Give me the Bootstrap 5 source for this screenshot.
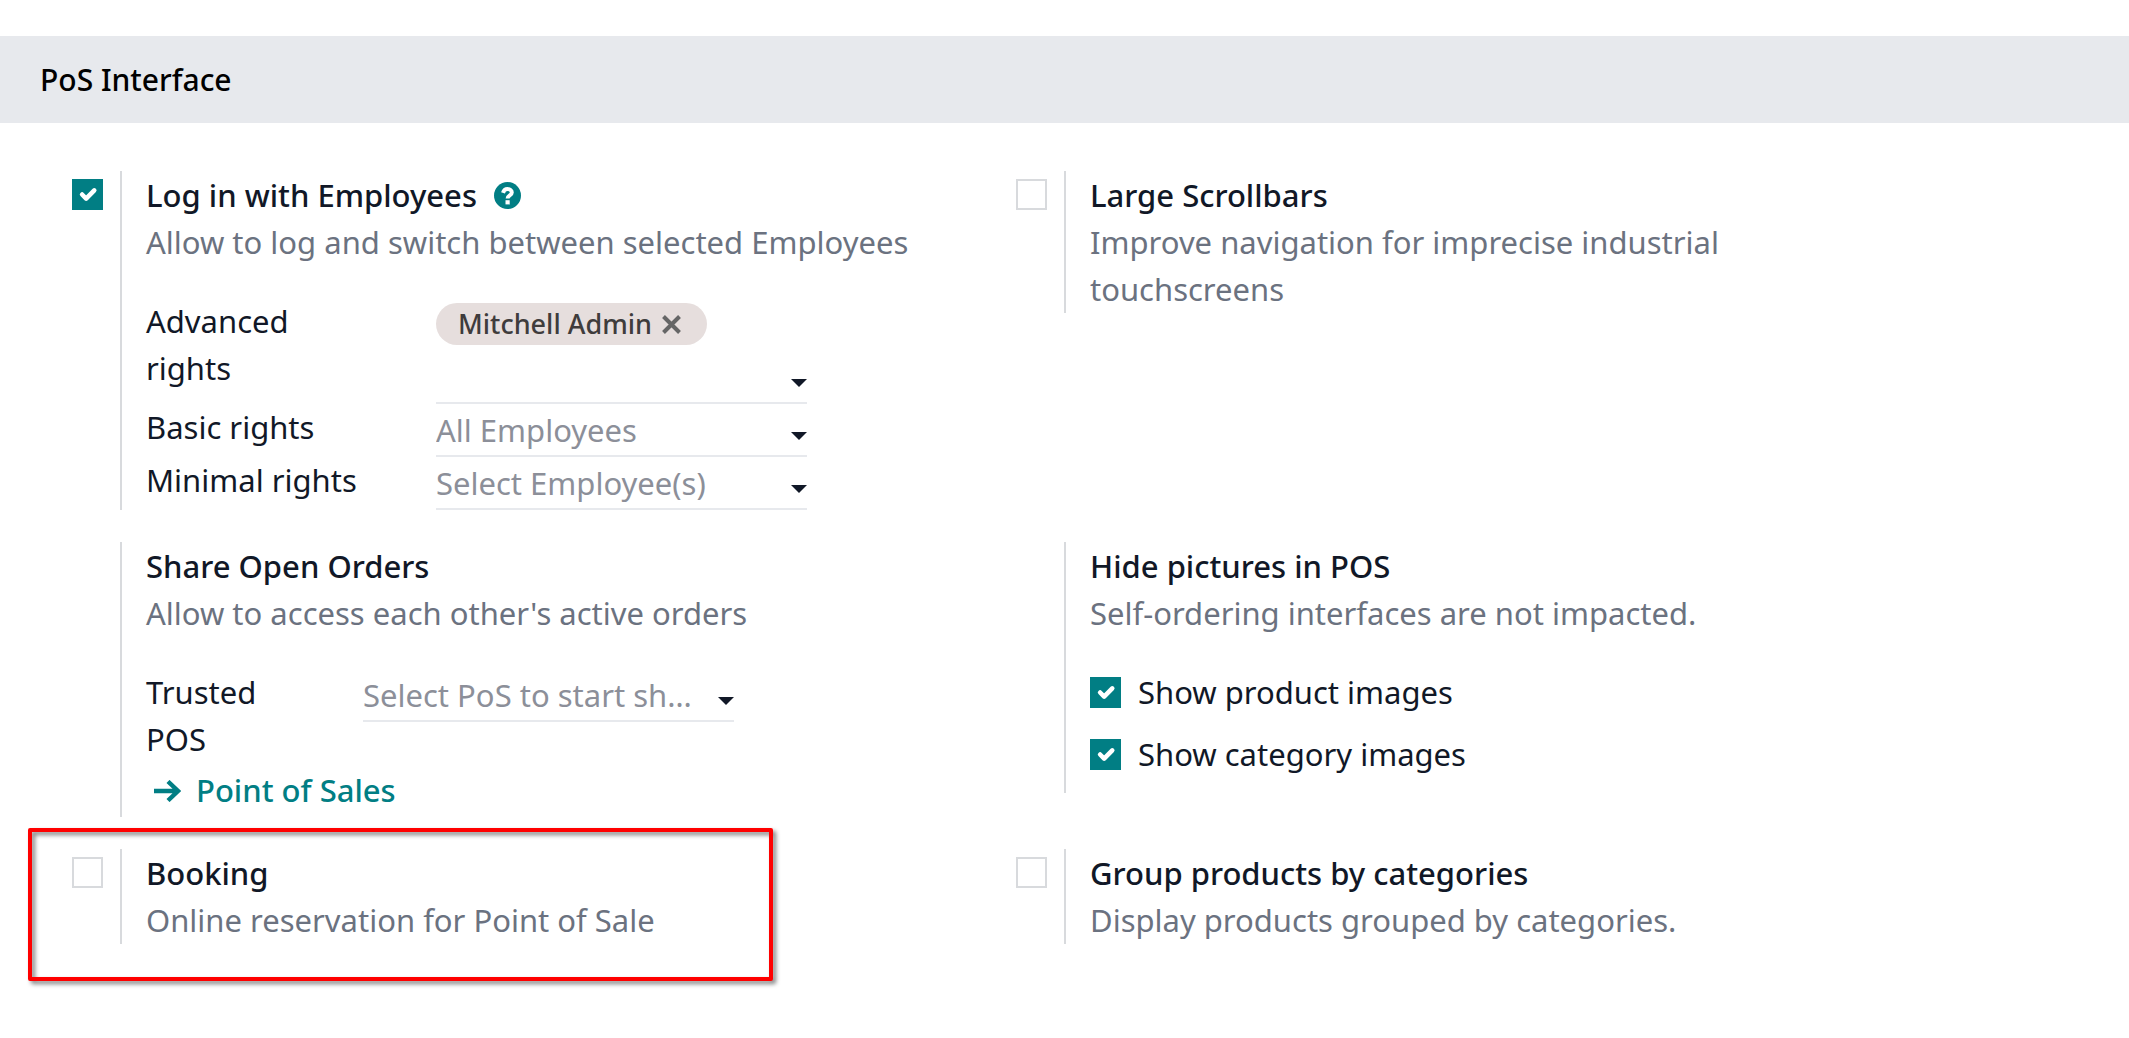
<!DOCTYPE html>
<html lang="en">
<head>
<meta charset="utf-8">
<meta name="viewport" content="width=device-width, initial-scale=1">
<title>PoS Interface</title>
<link href="https://cdn.jsdelivr.net/npm/bootstrap@5.3.0/dist/css/bootstrap.min.css" rel="stylesheet">
<style>
  body { font-family: "Noto Sans", sans-serif; font-size: 31px; line-height: 47px; color: #111827; background: #fff; }
  .block-title { padding: 20px 40px; background: #e7e9ed; color: #000; font-size: 30px; font-weight: 500; line-height: 47px; }
  .page { padding: 36px 0 94px; }
  .settings-grid { max-width: 1888px; margin: 48px 0 0 40px; row-gap: 32px; }
  .setting-box { padding: 0 32px; }
  .toggle-pane { flex: 0 0 48px; }
  .setting-pane { flex: 1 1 0; min-width: 0; border-left: 2px solid #d8dadd; padding: 1px 0 0 24px; }
  .setting-name { font-weight: 500; }
  .with-help { gap: 17px; }
  .hint { color: #6b7280; }
  .form-check-input.box-check { width: 31px; height: 31px; margin: 8px 0 0; border: 2px solid #d8dadd; border-radius: 0; flex: none; float: none; }
  .form-check-input.box-check:checked { background-color: #017e84; border-color: #017e84; background-size: 27px 27px;
    background-image: url("data:image/svg+xml,%3csvg xmlns='http://www.w3.org/2000/svg' viewBox='0 0 20 20'%3e%3cpath fill='none' stroke='%23fff' stroke-linecap='round' stroke-linejoin='round' stroke-width='3.4' d='m6 10 3 3 6-6'/%3e%3c/svg%3e"); }
  .fields { margin-top: 32px; }
  .wide-label { flex: 0 0 290px; padding-right: 64px; }
  .narrow-label { flex: 0 0 217px; padding-right: 64px; }
  .picker { width: 371px; border-bottom: 2px solid #e7e9ed; }
  .picker input { min-width: 0; height: 51px; padding: 0; border: 0; outline: 0; background: none; color: inherit; text-overflow: ellipsis; }
  .picker input::placeholder { color: #8c8f99; opacity: 1; }
  .picker .caret { width: 16px; height: 8px; margin: 12px 0 0 16px; flex: none; }
  .tag { height: 42px; margin: 5px 0 6px; padding: 0 26px 0 22px; gap: 10px; border-radius: 21px; background: #e6dedd; color: #3f3c3c; font-size: 27px; font-weight: 500; line-height: 42px; }
  .tag button { padding: 0; border: 0; background: none; display: flex; }
  .jump-link { padding: 4px 0 3px 8px; gap: 15px; color: #017e84; font-weight: 500; text-decoration: none; }
  .check-row { gap: 17px; padding-bottom: 15px; }
  .spotlight { position: absolute; top: -21px; left: -12px; width: 745px; height: 153px; border: 4px solid #f00; border-radius: 2px; pointer-events: none; filter: drop-shadow(3px 3px 2px rgba(0,0,0,.5)); }
</style>
<script src="https://cdn.jsdelivr.net/npm/bootstrap@5.3.0/dist/js/bootstrap.bundle.min.js"></script>
</head>
<body>
<main class="page">
<h2 class="block-title mb-0">PoS Interface</h2>
<form class="settings-grid row gx-0">

  <div class="setting-box col-6 d-flex">
    <div class="toggle-pane"><input class="form-check-input box-check d-block" type="checkbox" id="login" checked></div>
    <div class="setting-pane">
      <div class="with-help d-flex align-items-center">
        <label class="setting-name" for="login">Log in with Employees</label>
        <svg width="27" height="27" viewBox="0 0 27 27" role="img" aria-label="Help"><circle cx="13.500" cy="13.500" r="13.500" fill="#017e84"/><path d="M9 10.800c.8-2.600 2.200-3.700 4.500-3.700 2.500 0 4.300 1.300 4.300 3.300 0 3-4.200 2.800-4.200 6" fill="none" stroke="#fff" stroke-width="4"/><path d="M11.500 18.200h4.200v4.200h-4.200z" fill="#fff"/></svg>
      </div>
      <div class="hint">Allow to log and switch between selected Employees</div>
      <div class="fields">
        <div class="d-flex">
          <label class="wide-label" for="advanced">Advanced rights</label>
          <div class="picker">
            <span class="tag d-inline-flex align-items-center">Mitchell Admin
              <button type="button" aria-label="Remove Mitchell Admin"><svg width="19" height="19" viewBox="0 0 19 19"><path d="M1.500 1.500l16 16M17.500 1.500l-16 16" stroke="#666" stroke-width="4"/></svg></button>
            </span>
            <div class="d-flex align-items-center"><input class="flex-grow-1" id="advanced" type="text"><svg class="caret" viewBox="0 0 16 8"><path d="M0 0h16L8 8z" fill="#111827"/></svg></div>
          </div>
        </div>
        <div class="d-flex">
          <label class="wide-label" for="basic">Basic rights</label>
          <div class="picker d-flex align-items-center"><input class="flex-grow-1" id="basic" type="text" placeholder="All Employees"><svg class="caret" viewBox="0 0 16 8"><path d="M0 0h16L8 8z" fill="#111827"/></svg></div>
        </div>
        <div class="d-flex">
          <label class="wide-label" for="minimal">Minimal rights</label>
          <div class="picker d-flex align-items-center"><input class="flex-grow-1" id="minimal" type="text" placeholder="Select Employee(s)"><svg class="caret" viewBox="0 0 16 8"><path d="M0 0h16L8 8z" fill="#111827"/></svg></div>
        </div>
      </div>
    </div>
  </div>

  <div class="setting-box col-6 d-flex align-items-start">
    <div class="toggle-pane"><input class="form-check-input box-check d-block" type="checkbox" id="scrollbars"></div>
    <div class="setting-pane">
      <label class="setting-name d-block" for="scrollbars">Large Scrollbars</label>
      <div class="hint">Improve navigation for imprecise industrial touchscreens</div>
    </div>
  </div>

  <div class="setting-box col-6 d-flex align-items-start">
    <div class="toggle-pane"></div>
    <div class="setting-pane">
      <div class="setting-name">Share Open Orders</div>
      <div class="hint">Allow to access each other's active orders</div>
      <div class="fields d-flex align-items-start">
        <label class="narrow-label" for="trusted">Trusted POS</label>
        <div class="picker d-flex align-items-center"><input class="flex-grow-1" id="trusted" type="text" placeholder="Select PoS to start sharing orders"><svg class="caret" viewBox="0 0 16 8"><path d="M0 0h16L8 8z" fill="#111827"/></svg></div>
      </div>
      <a class="jump-link d-flex align-items-center" href="#"><svg width="27" height="22" viewBox="0 0 27 22"><path d="M0 11h24M14 1.500L24 11l-10 9.500" fill="none" stroke="#017e84" stroke-width="4.400"/></svg>Point of Sales</a>
    </div>
  </div>

  <div class="setting-box col-6 d-flex align-items-start">
    <div class="toggle-pane"></div>
    <div class="setting-pane">
      <div class="setting-name">Hide pictures in POS</div>
      <div class="hint">Self-ordering interfaces are not impacted.</div>
      <div class="fields">
        <div class="check-row d-flex align-items-start"><input class="form-check-input box-check" type="checkbox" id="product" checked><label for="product">Show product images</label></div>
        <div class="check-row d-flex align-items-start"><input class="form-check-input box-check" type="checkbox" id="category" checked><label for="category">Show category images</label></div>
      </div>
    </div>
  </div>

  <div class="setting-box col-6 d-flex align-items-start position-relative">
    <div class="toggle-pane"><input class="form-check-input box-check d-block" type="checkbox" id="booking"></div>
    <div class="setting-pane">
      <label class="setting-name d-block" for="booking">Booking</label>
      <div class="hint">Online reservation for Point of Sale</div>
    </div>
    <div class="spotlight"></div>
  </div>

  <div class="setting-box col-6 d-flex align-items-start">
    <div class="toggle-pane"><input class="form-check-input box-check d-block" type="checkbox" id="group"></div>
    <div class="setting-pane">
      <label class="setting-name d-block" for="group">Group products by categories</label>
      <div class="hint">Display products grouped by categories.</div>
    </div>
  </div>
</form>
</main>
</body>
</html>
